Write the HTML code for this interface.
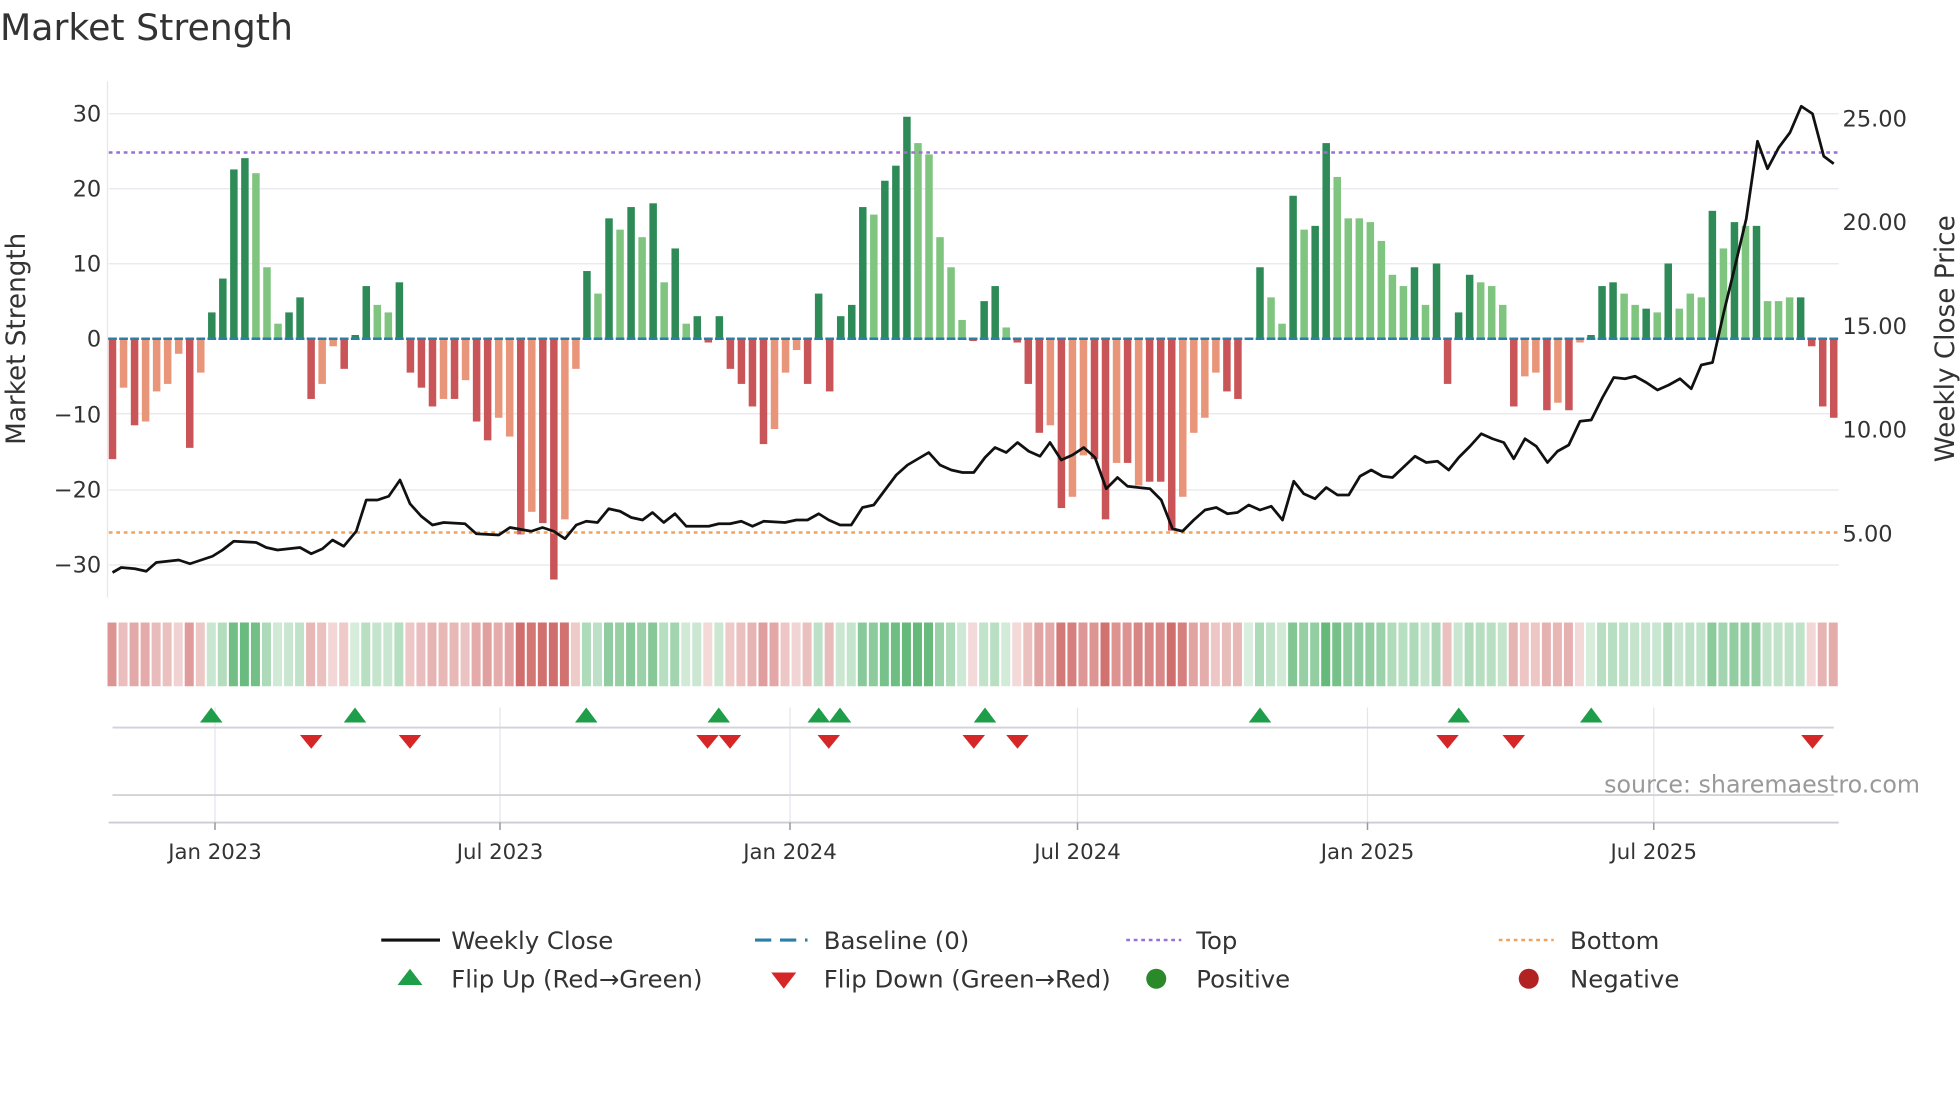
<!DOCTYPE html>
<html><head><meta charset="utf-8"><style>
html,body{margin:0;padding:0;background:#fff;width:1960px;height:1102px;overflow:hidden}
svg{display:block}
text{font-family:"DejaVu Sans","Liberation Sans",sans-serif;fill:#333}
</style></head><body>
<svg id="s" width="1960" height="1102" viewBox="0 0 1568 881.6" xmlns="http://www.w3.org/2000/svg">
<text x="0" y="32" font-size="29">Market Strength</text>
<g id="grid" stroke="#e6e6ee" stroke-width="1">
<line x1="87" x2="1471" y1="91" y2="91"/><line x1="87" x2="1471" y1="151" y2="151"/><line x1="87" x2="1471" y1="211" y2="211"/><line x1="87" x2="1471" y1="331" y2="331"/><line x1="87" x2="1471" y1="392" y2="392"/><line x1="87" x2="1471" y1="452" y2="452"/>
<line x1="86" x2="86" y1="65" y2="478"/>
</g>
<g id="bars"></g>
<line x1="87" x2="1471" y1="122" y2="122" stroke="#9b6fd6" stroke-width="2" stroke-dasharray="3,3"/>
<line x1="87" x2="1471" y1="426" y2="426" stroke="#f2a25a" stroke-width="2" stroke-dasharray="3,3"/>
<polyline id="price" fill="none" stroke="#111" stroke-width="2.2" stroke-linejoin="round"/>
<g font-size="18" text-anchor="end">
<text x="81" y="97">30</text><text x="81" y="157">20</text><text x="81" y="217">10</text><text x="81" y="277">0</text><text x="81" y="338">−10</text><text x="81" y="398">−20</text><text x="81" y="458">−30</text>
</g>
<g font-size="18">
<text x="1474" y="101">25.00</text><text x="1474" y="184">20.00</text><text x="1474" y="267">15.00</text><text x="1474" y="350">10.00</text><text x="1474" y="433">5.00</text>
</g>
<text font-size="21" transform="translate(20,271) rotate(-90)" text-anchor="middle">Market Strength</text>
<text font-size="21" transform="translate(1563,271) rotate(-90)" text-anchor="middle">Weekly Close Price</text>
<g id="strip"></g>
<g stroke="#e4e4ec" stroke-width="1">
<line x1="172" x2="172" y1="566" y2="658"/><line x1="400" x2="400" y1="566" y2="658"/><line x1="632" x2="632" y1="566" y2="658"/><line x1="862" x2="862" y1="566" y2="658"/><line x1="1094" x2="1094" y1="566" y2="658"/><line x1="1323" x2="1323" y1="566" y2="658"/>
</g>
<line x1="90" x2="1467" y1="582" y2="582" stroke="#d2d2d8" stroke-width="1.5"/>
<line x1="90" x2="1467" y1="636" y2="636" stroke="#d2d2d8" stroke-width="1.5"/>
<line x1="87" x2="1471" y1="658" y2="658" stroke="#ccccd2" stroke-width="1.5"/>
<g stroke="#999" stroke-width="1.2">
<line x1="172" x2="172" y1="658" y2="664"/><line x1="400" x2="400" y1="658" y2="664"/><line x1="632" x2="632" y1="658" y2="664"/><line x1="862" x2="862" y1="658" y2="664"/><line x1="1094" x2="1094" y1="658" y2="664"/><line x1="1323" x2="1323" y1="658" y2="664"/>
</g>
<g id="flips"></g>
<text x="1536" y="634" font-size="19" text-anchor="end" style="fill:#999">source: sharemaestro.com</text>
<g font-size="17" text-anchor="middle">
<text x="172" y="687">Jan 2023</text><text x="400" y="687">Jul 2023</text><text x="632" y="687">Jan 2024</text><text x="862" y="687">Jul 2024</text><text x="1094" y="687">Jan 2025</text><text x="1323" y="687">Jul 2025</text>
</g>
<g font-size="19.5">
<line x1="305" x2="352" y1="752" y2="752" stroke="#111" stroke-width="2.5"/><text x="361" y="759">Weekly Close</text>
<line x1="604" x2="646" y1="752" y2="752" stroke="#2a7fa8" stroke-width="2.5" stroke-dasharray="13,7"/><text x="659" y="759">Baseline (0)</text>
<line x1="901" x2="945" y1="752" y2="752" stroke="#9b6fd6" stroke-width="2" stroke-dasharray="3,3"/><text x="957" y="759">Top</text>
<line x1="1199" x2="1243" y1="752" y2="752" stroke="#f2a25a" stroke-width="2" stroke-dasharray="3,3"/><text x="1256" y="759">Bottom</text>
<polygon points="328,775 338,788 318,788" fill="#1f9e4a"/><text x="361" y="790">Flip Up (Red→Green)</text>
<polygon points="617,778 637,778 627,791" fill="#d62728"/><text x="659" y="790">Flip Down (Green→Red)</text>
<circle cx="925" cy="783" r="8" fill="#2a8a2a"/><text x="957" y="790">Positive</text>
<circle cx="1223" cy="783" r="8" fill="#b22222"/><text x="1256" y="790">Negative</text>
</g>
</svg>
<script>
var V=[[-16,1],[-6.5,0],[-11.5,1],[-11,0],[-7,0],[-6,0],[-2,0],[-14.5,1],[-4.5,0],[3.5,1],[8,1],[22.5,1],[24,1],[22,0],[9.5,0],[2,0],[3.5,1],[5.5,1],[-8,1],[-6,0],[-1,0],[-4,1],[0.5,1],[7,1],[4.5,0],[3.5,0],[7.5,1],[-4.5,1],[-6.5,1],[-9,1],[-8,0],[-8,1],[-5.5,0],[-11,1],[-13.5,1],[-10.5,0],[-13,0],[-26,1],[-23,0],[-24.5,1],[-32,1],[-24,0],[-4,0],[9,1],[6,0],[16,1],[14.5,0],[17.5,1],[13.5,0],[18,1],[7.5,0],[12,1],[2,0],[3,1],[-0.5,1],[3,1],[-4,1],[-6,1],[-9,1],[-14,1],[-12,0],[-4.5,0],[-1.5,0],[-6,1],[6,1],[-7,1],[3,1],[4.5,1],[17.5,1],[16.5,0],[21,1],[23,1],[29.5,1],[26,0],[24.5,0],[13.5,0],[9.5,0],[2.5,0],[-0.3,1],[5,1],[7,1],[1.5,0],[-0.5,1],[-6,1],[-12.5,1],[-11.5,0],[-22.5,1],[-21,0],[-15.5,0],[-16,1],[-24,1],[-16.5,0],[-16.5,1],[-19.5,0],[-19,1],[-19,1],[-25.5,1],[-21,0],[-12.5,0],[-10.5,0],[-4.5,0],[-7,1],[-8,1],[0,0],[9.5,1],[5.5,0],[2,0],[19,1],[14.5,0],[15,1],[26,1],[21.5,0],[16,0],[16,0],[15.5,0],[13,0],[8.5,0],[7,0],[9.5,1],[4.5,0],[10,1],[-6,1],[3.5,1],[8.5,1],[7.5,0],[7,0],[4.5,0],[-9,1],[-5,0],[-4.5,0],[-9.5,1],[-8.5,0],[-9.5,1],[-0.5,0],[0.5,1],[7,1],[7.5,1],[6,0],[4.5,0],[4,1],[3.5,0],[10,1],[4,0],[6,0],[5.5,0],[17,1],[12,0],[15.5,1],[15,0],[15,1],[5,0],[5,0],[5.5,0],[5.5,1],[-1,1],[-9,1],[-10.5,1]];
var ns="http://www.w3.org/2000/svg";
function el(p,t,a){var e=document.createElementNS(ns,t);for(var k in a)e.setAttribute(k,a[k]);p.appendChild(e);return e;}
var B=document.getElementById('bars'),S=document.getElementById('strip');
var n=V.length,step=(1467-90)/(n-1);
for(var i=0;i<n;i++){var x=90+i*step,v=V[i][0],d=V[i][1];
var c=v>=0?(d?'#2e8b57':'#7fc47f'):(d?'#c95558':'#e8957a');
var y0=271,y1=271-v*6.02;
el(B,'rect',{x:x-3,y:Math.min(y0,y1),width:6,height:Math.max(0.8,Math.abs(y1-y0)),fill:c});
el(B,'rect',{x:x-3.5,y:270,width:7,height:2,fill:'#2a7fa8'});
var a=Math.min(1,0.25+Math.abs(v)/30*0.9);
el(S,'rect',{x:x-4,y:498,width:7.2,height:51,fill:v>=0?'#3fa85a':'#c44a48','fill-opacity':a*0.8});
}
var P=[[90,458],[97,454],[108,455],[117,457],[125,450],[143,448],[152,451],[170,445],[178,440],[187,433],[205,434],[213,438],[222,440],[240,438],[249,443],[258,439],[266,432],[275,437],[285,425],[293,400],[302,400],[311,397],[320,384],[328,403],[337,413],[346,420],[355,418],[372,419],[381,427],[399,428],[408,422],[425,425],[434,422],[443,425],[452,431],[461,420],[469,417],[478,418],[487,407],[496,409],[505,414],[514,416],[522,410],[531,418],[540,411],[549,421],[567,421],[575,419],[584,419],[593,417],[602,421],[611,417],[628,418],[637,416],[646,416],[655,411],[663,416],[672,420],[681,420],[690,406],[699,404],[708,392],[717,380],[726,372],[743,362],[752,372],[761,376],[770,378],[779,378],[788,366],[796,358],[805,362],[814,354],[823,361],[832,365],[840,354],[849,368],[858,364],[867,358],[876,366],[885,391],[894,382],[902,389],[920,391],[929,400],[938,423],[946,425],[955,416],[964,408],[973,406],[982,411],[990,410],[999,404],[1008,408],[1017,405],[1026,416],[1035,385],[1043,395],[1052,399],[1061,390],[1070,396],[1079,396],[1088,381],[1097,376],[1106,381],[1114,382],[1132,365],[1141,370],[1150,369],[1159,376],[1167,366],[1176,357],[1185,347],[1194,351],[1203,354],[1211,367],[1220,351],[1229,357],[1238,370],[1246,361],[1255,356],[1264,337],[1273,336],[1282,318],[1291,302],[1300,303],[1308,301],[1317,306],[1326,312],[1335,308],[1344,303],[1353,311],[1361,292],[1370,290],[1379,250],[1388,213],[1397,175],[1406,113],[1414,135],[1423,118],[1432,106],[1441,85],[1450,91],[1459,125],[1467,131]];
document.getElementById('price').setAttribute('points',P.map(function(p){return p.join(',')}).join(' '));
var F=document.getElementById('flips');
[169,284,469,575,655,672,788,1008,1167,1273].forEach(function(x){el(F,'polygon',{points:(x)+',566 '+(x+9)+',578 '+(x-9)+',578',fill:'#1f9e4a'});});
[249,328,566,584,663,779,814,1158,1211,1450].forEach(function(x){el(F,'polygon',{points:(x-9)+',588 '+(x+9)+',588 '+x+',599',fill:'#d62728'});});
</script>
</body></html>
